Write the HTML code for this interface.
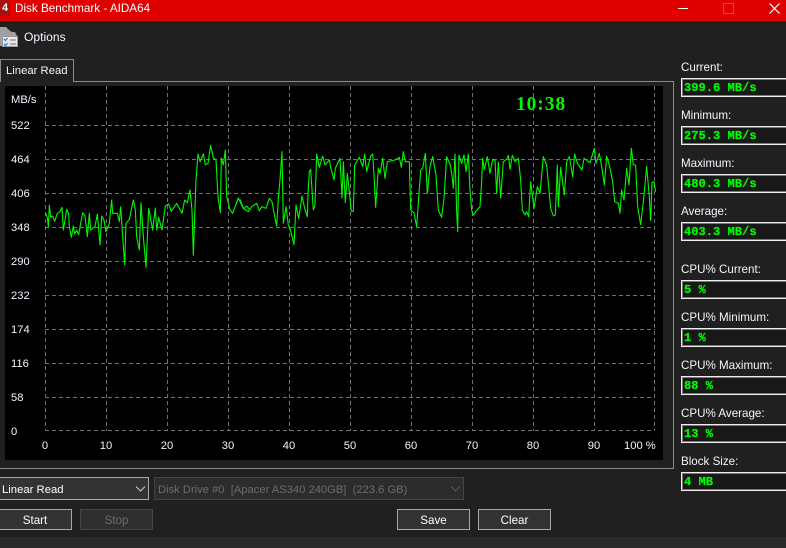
<!DOCTYPE html>
<html><head><meta charset="utf-8"><style>
html,body{margin:0;padding:0;width:786px;height:548px;overflow:hidden;background:#202020}
body{position:relative;font-family:"Liberation Sans",sans-serif;font-size:12px;color:#f2f6ff}
.a{position:absolute;white-space:pre;line-height:14px}
.b{position:absolute;box-sizing:border-box}
.l{position:absolute;left:681px;line-height:14px;white-space:pre;font-size:11.6px;margin-top:1px}
.v{position:absolute;left:681px;width:120px;height:19px;box-sizing:border-box;border:1px solid #eee;outline:1px solid #777;outline-offset:-2px;background:#181818;color:#00f800;font:bold 12.1px/18px "Liberation Mono",monospace;-webkit-text-stroke:.25px #00f800;padding-left:2px;white-space:pre}
.btn{position:absolute;top:509px;height:21px;box-sizing:border-box;border:1px solid #a8a8a8;background:#333;text-align:center;line-height:21px;font-size:11.6px;color:#fff}
.y{position:absolute;left:11px;line-height:14px;color:#f2f6ff;font-size:11.2px;margin-top:1px}
.x{position:absolute;top:439px;width:40px;text-align:center;line-height:14px;font-size:11.2px}
</style></head><body>
<div class="b" style="left:0;top:0;width:786px;height:21px;background:#e00000"></div>
<div class="b" style="left:0;top:0;width:10px;height:16px;background:#a81010"></div>
<div class="a" style="left:2px;top:1px;font-weight:bold;font-size:11px;color:#fff">4</div>
<div class="a" style="left:15px;top:2px;font-size:11.7px;color:#fff">Disk Benchmark - AIDA64</div>
<div class="b" style="left:678px;top:8px;width:10px;height:1px;background:#fff"></div>
<div class="b" style="left:723px;top:3px;width:11px;height:11px;border:1px solid #f04040"></div>
<svg class="b" style="left:769px;top:3px" width="11" height="11"><path d="M.5 .5L10.5 10.5M10.5 .5L.5 10.5" stroke="#fff" stroke-width="1.2" fill="none"/></svg>

<svg class="b" style="left:0;top:24px" width="20" height="24">
<path d="M0 3h6l3 3 3 2 3 0 3 6v8H0z" fill="#a0a0a0"/>
<rect x="2.500" y="12.500" width="15" height="10" fill="#e8e8e8" stroke="#999"/>
<path d="M4 15l1.500 1.500 2-2.500M4 20l1.500 1.500 2-2.500" stroke="#2a80d8" stroke-width="1.300" fill="none"/>
<path d="M10 16h6M10 20h6" stroke="#777" fill="none"/>
</svg>
<div class="a" style="left:24px;top:30px;font-size:12.1px">Options</div>

<div class="b" style="left:0;top:59px;width:74px;height:23px;border:1px solid #8a8a8a;border-bottom:0;background:#202020;z-index:2"></div>
<div class="a" style="left:6px;top:64px;z-index:3;font-size:11.3px">Linear Read</div>
<div class="b" style="left:0;top:81px;width:674px;height:388px;border-top:1px solid #8a8a8a;border-right:1px solid #8a8a8a;border-bottom:1px solid #8a8a8a"></div>
<div class="b" style="left:5px;top:86px;width:658px;height:374px;background:#000"></div>

<svg class="b" style="left:0;top:0" width="786" height="548">
<g stroke="#727272" stroke-width="1" stroke-dasharray="4 3" fill="none" shape-rendering="crispEdges">
<path d="M45.500 86V431M106.500 86V431M167.500 86V431M228.500 86V431M289.500 86V431M350.500 86V431M411.500 86V431M472.500 86V431M533.500 86V431M594.500 86V431M654.500 86V431"/>
<path d="M45 125.500H655M45 159.500H655M45 193.500H655M45 227.500H655M45 261.500H655M45 295.500H655M45 329.500H655M45 363.500H655M45 397.500H655M45 430.500H655"/>
</g>
<g fill="none" stroke="#00f800" stroke-linejoin="round">
<polyline stroke-width="3.300" transform="translate(30,130) scale(.33333)" points="47,250 52,262 55,290 58,226 62,262 68,258 74,274 82,250 90,245 96,232 100,300 105,270 110,238 116,252 118,290 124,322 130,288 134,312 140,300 146,314 152,280 158,248 165,258 172,320 178,250 182,300 195,290 202,252 210,345 215,258 222,270 228,305 238,280 245,210 248,250 262,250 268,275 272,230 278,320 284,404 288,280 298,268 310,210 316,240 320,320 328,360 333,218 340,320 348,412 356,235 368,300 376,234 380,300 386,262 396,300 406,228 416,222 424,244 440,220 456,250 464,210 472,218 480,180 486,240 490,376 498,150 504,72 510,95 520,72 526,104 534,100 542,46 550,84 558,90 564,200 571,248 574,84 580,105 586,60 590,200 600,240 608,250 625,204 640,236 650,228 660,240"/>
<polyline stroke-width="3.300" transform="translate(240,130) scale(.33333)" points="0,208 10,235 25,245 35,230 50,220 58,242 65,230 78,235 88,205 96,215 105,265 110,288 115,205 120,150 126,65 130,280 138,230 145,285 150,295 155,315 162,344 168,225 176,265 186,198 194,235 202,260 204,195 208,125 212,118 220,240 225,225 230,72 238,112 248,78 255,105 268,90 272,112 282,150 286,115 300,85 306,204 310,95 316,218 322,130 334,244 340,244 344,105 358,82 368,110 374,72 380,125 392,78 398,72 402,135 407,232 415,115 420,130 428,85 435,145 442,95 465,90 478,82 484,112 490,65 496,95 508,95 512,240 522,248 530,290 542,120 548,115 556,70 562,190 570,110 578,80 588,135 595,240 605,262 612,205 620,80 630,102"/>
<polyline stroke-width="3.300" transform="translate(450,130) scale(.33333)" points="0,102 5,130 10,175 15,72 20,245 23,305 27,75 35,100 42,75 48,125 55,72 60,180 65,240 70,256 78,244 90,230 95,155 98,85 103,118 112,80 120,130 128,88 135,90 140,190 145,96 152,204 160,95 170,88 175,76 180,118 187,76 195,95 205,85 212,150 217,240 225,255 230,245 236,260 242,155 252,235 262,170 270,190 280,80 290,105 297,180 302,235 310,258 316,255 322,105 325,230 332,112 343,195 350,95 358,80 368,140 374,72 382,100 396,120 402,85 420,98 433,55 438,100 448,70 455,110 463,165 470,78 478,105 488,155 494,215 505,220 510,250 515,180 522,210 530,115 537,165 544,55 550,105 557,105 563,230 572,284 580,215 590,110 598,200 602,272 606,158 612,155 617,185"/>
</g>
</svg>

<div class="a" style="left:516px;top:96px;font:bold 19.500px/18px 'Liberation Serif',serif;color:#00f800;letter-spacing:.9px">10:38</div>

<div class="y" style="top:92px">MB/s</div>
<div class="y" style="top:118px">522</div>
<div class="y" style="top:152px">464</div>
<div class="y" style="top:186px">406</div>
<div class="y" style="top:220px">348</div>
<div class="y" style="top:254px">290</div>
<div class="y" style="top:288px">232</div>
<div class="y" style="top:322px">174</div>
<div class="y" style="top:356px">116</div>
<div class="y" style="top:390px">58</div>
<div class="y" style="top:424px">0</div>

<div class="x" style="left:25px">0</div>
<div class="x" style="left:86px">10</div>
<div class="x" style="left:147px">20</div>
<div class="x" style="left:208px">30</div>
<div class="x" style="left:269px">40</div>
<div class="x" style="left:330px">50</div>
<div class="x" style="left:391px">60</div>
<div class="x" style="left:452px">70</div>
<div class="x" style="left:513px">80</div>
<div class="x" style="left:574px">90</div>
<div class="a" style="left:624px;top:439px;font-size:11.2px">100 %</div>

<div class="l" style="top:60px">Current:</div><div class="v" style="top:78px">399.6 MB/s</div>
<div class="l" style="top:108px">Minimum:</div><div class="v" style="top:126px">275.3 MB/s</div>
<div class="l" style="top:156px">Maximum:</div><div class="v" style="top:174px">480.3 MB/s</div>
<div class="l" style="top:204px">Average:</div><div class="v" style="top:222px">403.3 MB/s</div>
<div class="l" style="top:262px">CPU% Current:</div><div class="v" style="top:280px">5 %</div>
<div class="l" style="top:310px">CPU% Minimum:</div><div class="v" style="top:328px">1 %</div>
<div class="l" style="top:358px">CPU% Maximum:</div><div class="v" style="top:376px">88 %</div>
<div class="l" style="top:406px">CPU% Average:</div><div class="v" style="top:424px">13 %</div>
<div class="l" style="top:454px">Block Size:</div><div class="v" style="top:472px">4 MB</div>

<div class="b" style="left:-2px;top:477px;width:151px;height:23px;border:1px solid #a8a8a8;background:#333"></div>
<div class="a" style="left:2px;top:483px;font-size:11.300px;color:#fff">Linear Read</div>
<svg class="b" style="left:135px;top:485px" width="12" height="8"><path d="M1 1.500L5.500 6L10 1.500" stroke="#ccc" fill="none"/></svg>
<div class="b" style="left:154px;top:477px;width:310px;height:23px;border:1px solid #444;background:#2c2c2c"></div>
<div class="a" style="left:158px;top:483px;font-size:11.200px;color:#6c6c6c">Disk Drive #0  [Apacer AS340 240GB]  (223.6 GB)</div>
<svg class="b" style="left:450px;top:485px" width="12" height="8"><path d="M1 1.500L5.500 6L10 1.500" stroke="#5a5a5a" fill="none"/></svg>

<div class="btn" style="left:-2px;width:74px">Start</div>
<div class="btn" style="left:80px;width:73px;border-color:#444;background:#2f2f2f;color:#6c6c6c">Stop</div>
<div class="btn" style="left:397px;width:73px">Save</div>
<div class="btn" style="left:478px;width:73px">Clear</div>
<div class="b" style="left:0;top:537px;width:786px;height:11px;background:#2a2a2a"></div>
</body></html>
